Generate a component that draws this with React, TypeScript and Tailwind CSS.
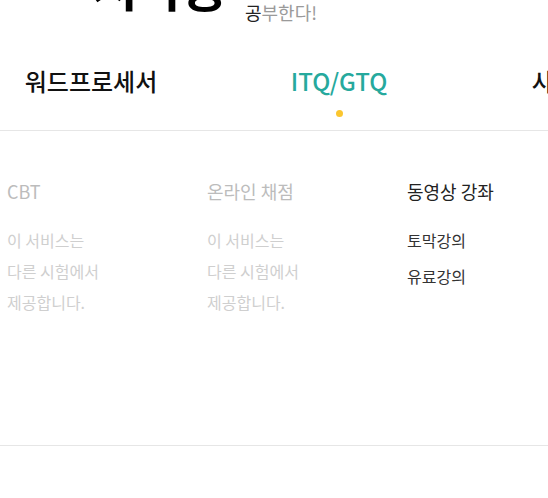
import React from "react";

const font = { fontFamily: '"Noto Sans CJK KR", "Noto Sans", sans-serif' };

export default function App() {
  return (
    <div className="w-[548px] h-[498px] overflow-hidden bg-white" style={font}>
      {/* header */}
      <div className="h-[60px] overflow-hidden">
        <div className="flex items-start pl-[92px]">
          <div className="mt-[-40px] text-[50px] leading-[50px] font-bold text-black tracking-[-1px]">시나공</div>
          <div className="ml-[18px] mt-[1px] text-[18px] leading-[22px] text-[#9a9a9a]">
            <span className="text-[#222]">공</span>부한다!
          </div>
        </div>
      </div>

      {/* nav */}
      <nav className="h-[71px] border-b border-[#e6e6e6] overflow-hidden">
        <div className="flex ml-[-33px]">
          {[
            { t: "워드프로세서", active: false },
            { t: "ITQ/GTQ", active: true },
            { t: "사무자동화", active: false },
          ].map((n) => (
            <div key={n.t} className="w-[248px] shrink-0 flex flex-col items-center pt-[5px]">
              <span
                className={
                  "text-[24px] leading-[32px] font-medium whitespace-nowrap " +
                  (n.active ? "text-[#26a99d]" : "text-[#111]")
                }
              >
                {n.t}
              </span>
              {n.active ? (
                <span className="mt-[13px] w-[7px] h-[7px] rounded-full bg-[#fbc62f]" />
              ) : null}
            </div>
          ))}
        </div>
      </nav>

      {/* submenu */}
      <div className="h-[315px] border-b border-[#e6e6e6] flex pl-[7px] pt-[47px]">
        <div className="w-[200px] shrink-0">
          <div className="text-[18px] leading-[26px] text-[#bcbcbc]">CBT</div>
          <p className="mt-[21px] text-[16px] leading-[31px] text-[#cfcfcf]">
            이 서비스는
            <br />
            다른 시험에서
            <br />
            제공합니다.
          </p>
        </div>
        <div className="w-[200px] shrink-0">
          <div className="text-[18px] leading-[26px] text-[#bcbcbc]">온라인 채점</div>
          <p className="mt-[21px] text-[16px] leading-[31px] text-[#cfcfcf]">
            이 서비스는
            <br />
            다른 시험에서
            <br />
            제공합니다.
          </p>
        </div>
        <div className="w-[200px] shrink-0">
          <div className="text-[18px] leading-[26px] text-[#222]">동영상 강좌</div>
          <ul className="mt-[21px] flex flex-col gap-[5px] text-[16px] leading-[31px] text-[#333]">
            <li>토막강의</li>
            <li>유료강의</li>
          </ul>
        </div>
      </div>
    </div>
  );
}
